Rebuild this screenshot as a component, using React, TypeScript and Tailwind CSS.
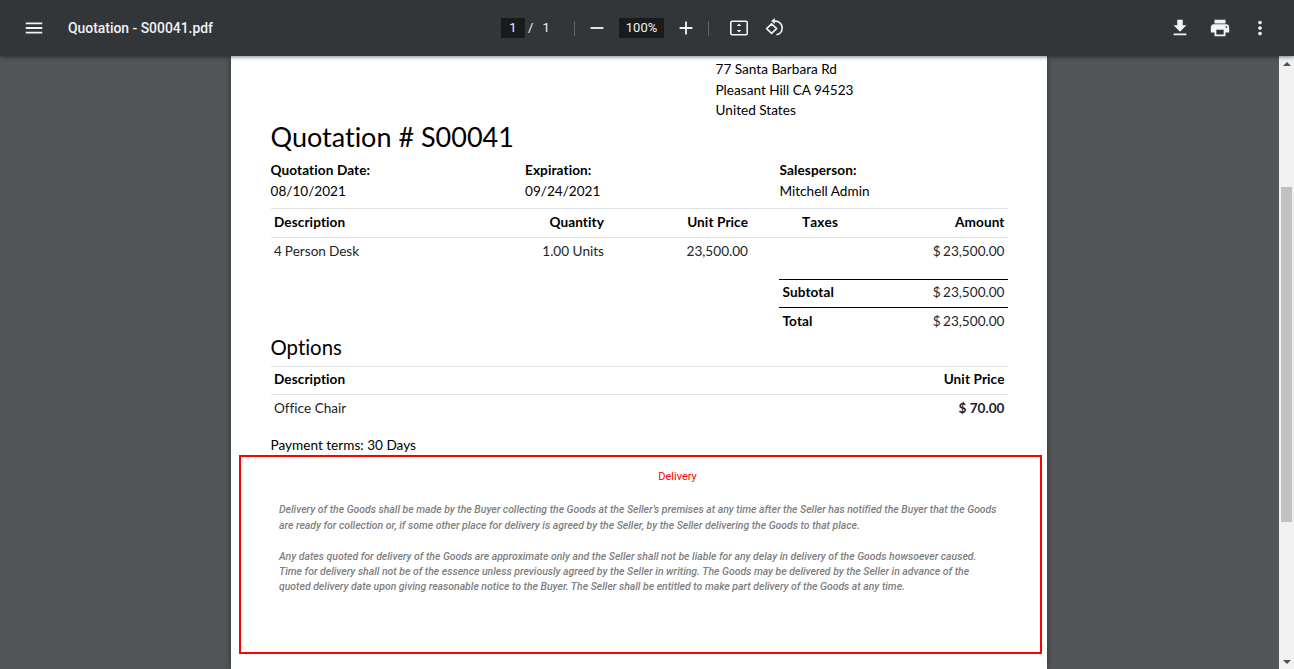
const Icon = ({ d, className = 'w-[22px] h-[22px]' }: { d: string; className?: string }) => (
	<svg viewBox="0 0 24 24" fill="currentColor" className={className}>
		<path d={d} />
	</svg>
);

const Sep = () => <div className="w-px h-[15px] bg-[#5f6367]" />;

const Toolbar = () => (
	<div className="relative z-10 h-14 shrink-0 bg-[#323639] text-[#f1f3f4] flex items-center shadow-[0_1px_4px_rgba(0,0,0,0.5)] font-['Roboto',sans-serif]">
		<div className="w-[68px] shrink-0 pl-[23px]">
			<Icon d="M3 18h18v-2H3v2zm0-5h18v-2H3v2zm0-7v2h18V6H3z" />
		</div>
		<div className="w-[433px] shrink-0 text-[13.9px] font-medium">Quotation - S00041.pdf</div>
		<div className="w-6 h-5 shrink-0 bg-[#191b1c] text-[13px] flex items-center justify-center">1</div>
		<div className="w-[49px] shrink-0 text-[13px] flex pl-[3px] gap-[9px]">
			<span>/</span>
			<span>1</span>
		</div>
		<Sep />
		<div className="w-[44px] shrink-0 flex justify-center">
			<Icon d="M19 13H5v-2h14v2z" />
		</div>
		<div className="w-[45px] h-5 shrink-0 bg-[#191b1c] text-[13px] flex items-center justify-center">100%</div>
		<div className="w-[44px] shrink-0 flex justify-center">
			<Icon d="M19 13h-6v6h-2v-6H5v-2h6V5h2v6h6v2z" />
		</div>
		<Sep />
		<div className="w-[59px] shrink-0 flex justify-center">
			<svg viewBox="0 0 20 20" fill="none" className="w-5 h-5">
				<rect x="1.800" y="3.200" width="16.400" height="13.600" rx="1.200" stroke="currentColor" strokeWidth="1.600" />
				<path d="M10 5.400 12.200 8H7.800zM10 14.600 7.800 12h4.400z" fill="currentColor" />
			</svg>
		</div>
		<div className="w-[14px] shrink-0 flex justify-center">
			<svg viewBox="0 0 20 20" fill="none" className="w-5 h-5 shrink-0">
				<path d="M1.600 10.600 6.600 5.800l5 4.800-5 4.800z" stroke="currentColor" strokeWidth="1.600" strokeLinejoin="round" />
				<path d="M8.200 3.400c4.400-1 8.800 1.600 9 6.400.1 3.600-2.400 6.400-5.800 7" stroke="currentColor" strokeWidth="1.600" />
				<path d="M9.800 0 9.800 6 6.200 3z" fill="currentColor" />
			</svg>
		</div>
		<div className="ml-auto flex items-center gap-[18px] pr-[23px]">
			<Icon d="M19 9h-4V3H9v6H5l7 7 7-7zM5 18v2h14v-2H5z" />
			<Icon d="M19 8H5c-1.660 0-3 1.340-3 3v6h4v4h12v-4h4v-6c0-1.660-1.340-3-3-3zm-3 11H8v-5h8v5zm3-7c-.55 0-1-.45-1-1s.45-1 1-1 1 .45 1 1-.45 1-1 1zm-1-9H6v4h12V3z" />
			<Icon d="M12 8c1.100 0 2-.9 2-2s-.9-2-2-2-2 .9-2 2 .9 2 2 2zm0 2c-1.100 0-2 .9-2 2s.9 2 2 2 2-.9 2-2-.9-2-2-2zm0 6c-1.100 0-2 .9-2 2s.9 2 2 2 2-.9 2-2-.9-2-2-2z" />
		</div>
	</div>
);

const Scrollbar = () => (
	<div className="w-[15px] shrink-0 bg-[#f1f1f1] flex flex-col items-center">
		<div className="h-[15px] w-full flex items-center justify-center">
			<div className="w-0 h-0 border-x-[4px] border-x-transparent border-b-[4px] border-b-[#505050]" />
		</div>
		<div className="w-[11px] h-[335px] mt-[116px] bg-[#c1c1c1]" />
		<div className="h-[15px] w-full mt-auto flex items-center justify-center">
			<div className="w-0 h-0 border-x-[4px] border-x-transparent border-t-[4px] border-t-[#505050]" />
		</div>
	</div>
);

const cols = 'grid grid-cols-[190px_147px_144px_90px_166.5px]';
const amount = '[word-spacing:-1px]';
const bold = 'font-bold tracking-[0.1px]';

const Page = () => (
	<div className="w-[816px] h-[613px] shrink-0 bg-white overflow-hidden shadow-[0_0_6px_rgba(0,0,0,0.45)] font-['Lato',sans-serif] text-[13.6px] [font-variant-ligatures:none] text-black pl-2 pr-[5px]">
		<div className="pl-[31.5px] pr-[34px]">
			<div className="pl-[445px] pt-[3px] leading-[20.5px]">
				<div>77 Santa Barbara Rd</div>
				<div>Pleasant Hill CA 94523</div>
				<div>United States</div>
			</div>
			<h1 className="text-[27px] leading-[34px] mt-[-1px]">Quotation # S00041</h1>
			<div className="grid grid-cols-[254.5px_254.5px_1fr] mt-[6px] leading-[21px]">
				<div>
					<div className={bold}>Quotation Date:</div>
					<div>08/10/2021</div>
				</div>
				<div>
					<div className={bold}>Expiration:</div>
					<div>09/24/2021</div>
				</div>
				<div>
					<div className={bold}>Salesperson:</div>
					<div>Mitchell Admin</div>
				</div>
			</div>
			<div className={`${cols} ${bold} mt-[6px] border-y border-[#dee2e6] h-[30px] items-center pb-px`}>
				<div className="pl-[3.5px]">Description</div>
				<div className="text-right pr-[3.5px]">Quantity</div>
				<div className="text-right pr-[3.5px]">Unit Price</div>
				<div className="text-right pr-[3.5px] [font-kerning:none]">Taxes</div>
				<div className="text-right pr-[3.5px]">Amount</div>
			</div>
			<div className={`${cols} h-[27px] items-center text-[#212529]`}>
				<div className="pl-[3.5px] [word-spacing:-0.5px]">4 Person Desk</div>
				<div className="text-right pr-[3.5px]">1.00 Units</div>
				<div className="text-right pr-[3.5px]">23,500.00</div>
				<div />
				<div className={`text-right pr-[3.5px] ${amount}`}>$ 23,500.00</div>
			</div>
			<div className="ml-auto mt-[14px] w-[229px]">
				<div className="h-[29px] border-y border-black flex items-center justify-between px-[3.5px] pb-px text-[#212529]">
					<span className={`${bold} text-black`}>Subtotal</span>
					<span className={amount}>$ 23,500.00</span>
				</div>
				<div className="h-[28px] flex items-center justify-between px-[3.5px] pb-px text-[#212529]">
					<span className={`${bold} text-black`}>Total</span>
					<span className={amount}>$ 23,500.00</span>
				</div>
			</div>
			<h2 className="text-[20.4px] leading-[26px] mt-[-2px] pb-px">Options</h2>
			<div className={`${bold} mt-[5px] border-y border-[#dee2e6] h-[29px] flex items-center justify-between px-[3.5px] pb-px`}>
				<span>Description</span>
				<span>Unit Price</span>
			</div>
			<div className="h-[27px] flex items-center justify-between px-[3.5px] text-[#212529]">
				<span>Office Chair</span>
				<span className="font-bold">$ 70.00</span>
			</div>
			<div className="mt-[13px] leading-[21px]">Payment terms: 30 Days</div>
		</div>
		<div className="mt-[-1px] w-[803px] h-[199px] border-2 border-[#ff0000] font-['Roboto',sans-serif]">
			<div className="mt-3 pl-[74px] text-center text-[11px] leading-4 text-[#ff0000]">Delivery</div>
			<div className="pl-[38px] pt-[17px] text-[10.45px] italic font-medium text-[#808080] whitespace-nowrap">
				<div className="leading-4">Delivery of the Goods shall be made by the Buyer collecting the Goods at the Seller’s premises at any time after the Seller has notified the Buyer that the Goods</div>
				<div className="leading-4">are ready for collection or, if some other place for delivery is agreed by the Seller, by the Seller delivering the Goods to that place.</div>
				<div className="leading-[15px] mt-[15px]">Any dates quoted for delivery of the Goods are approximate only and the Seller shall not be liable for any delay in delivery of the Goods howsoever caused.</div>
				<div className="leading-[15px]">Time for delivery shall not be of the essence unless previously agreed by the Seller in writing. The Goods may be delivered by the Seller in advance of the</div>
				<div className="leading-[15px]">quoted delivery date upon giving reasonable notice to the Buyer. The Seller shall be entitled to make part delivery of the Goods at any time.</div>
			</div>
		</div>
	</div>
);

export default function App() {
	return (
		<div className="h-[669px] w-[1294px] flex flex-col overflow-hidden bg-[#525659]">
			<Toolbar />
			<div className="flex-1 min-h-0 flex">
				<div className="flex-1 flex justify-center pr-px">
					<Page />
				</div>
				<Scrollbar />
			</div>
		</div>
	);
}
